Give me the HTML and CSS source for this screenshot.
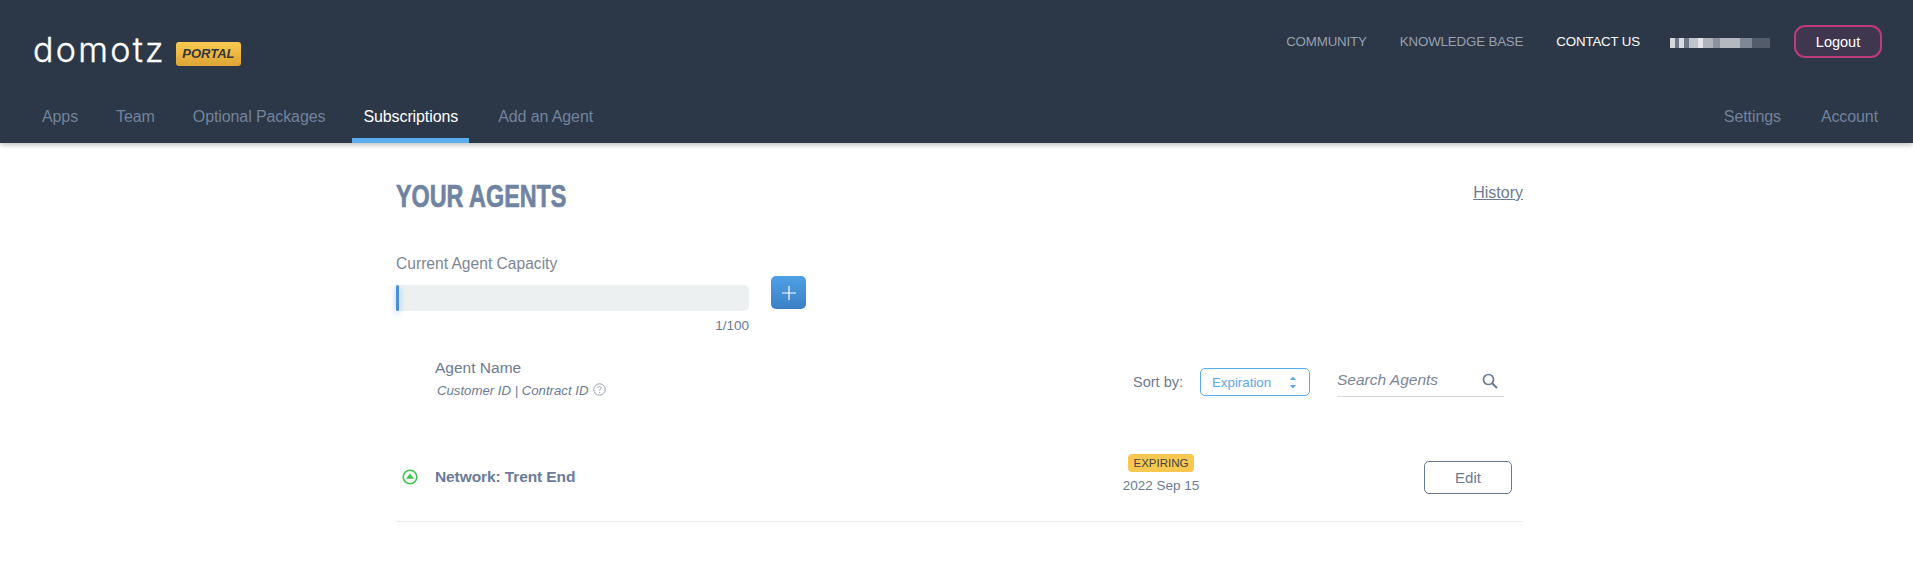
FILE: index.html
```html
<!DOCTYPE html>
<html lang="en">
<head>
<meta charset="utf-8">
<title>Domotz Portal - Subscriptions</title>
<link rel="stylesheet" href="styles.css">
</head>
<body>
<header class="header">
  <div class="top">
    <div class="brand">
      <span class="logo">domotz</span>
      <span class="portal">PORTAL</span>
    </div>
    <nav class="top-links">
      <a class="top-link">COMMUNITY</a>
      <a class="top-link">KNOWLEDGE BASE</a>
      <a class="top-link active">CONTACT US</a>
      <span class="redacted"></span>
      <button class="logout">Logout</button>
    </nav>
  </div>
  <div class="tabs">
    <nav class="tab-group">
      <a class="tab">Apps</a>
      <a class="tab">Team</a>
      <a class="tab">Optional Packages</a>
      <a class="tab current">Subscriptions</a>
      <a class="tab">Add an Agent</a>
    </nav>
    <nav class="tab-group right">
      <a class="tab">Settings</a>
      <a class="tab">Account</a>
    </nav>
  </div>
</header>
<main class="main">
  <div class="title-row">
    <h1 class="title">YOUR AGENTS</h1>
    <a class="history">History</a>
  </div>
  <div class="capacity-label">Current Agent Capacity</div>
  <div class="capacity">
    <div class="meter-wrap">
      <div class="meter"><div class="meter-fill"></div></div>
      <div class="meter-count">1/100</div>
    </div>
    <button class="add" aria-label="Add">
      <svg width="16" height="16" viewBox="0 0 16 16"><path d="M8 1v14M1 8h14" stroke="#fff" stroke-width="1.2" fill="none"/></svg>
    </button>
  </div>
  <div class="list-head">
    <div class="head-left">
      <div class="head-name">Agent Name</div>
      <div class="head-ids">Customer ID | Contract ID
        <svg class="help" width="13" height="13" viewBox="0 0 13 13"><circle cx="6.5" cy="6.5" r="5.7" fill="none" stroke="#7f8ba0" stroke-width=".8"/><path d="M4.9 5.1c0-2.1 3.2-2.1 3.2-.1 0 1.2-1.6 1.2-1.6 2.7" fill="none" stroke="#7f8ba0" stroke-width=".8"/><circle cx="6.5" cy="9.5" r=".55" fill="#7f8ba0"/></svg>
      </div>
    </div>
    <div class="head-right">
      <span class="sort-label">Sort by:</span>
      <div class="select">
        <span>Expiration</span>
        <svg width="8" height="13" viewBox="0 0 8 13"><path d="M4 0.5 7 4H1zM4 12.5 1 9h6z" fill="#5aa9ee"/></svg>
      </div>
      <div class="search">
        <span class="search-text">Search Agents</span>
        <svg width="16" height="16" viewBox="0 0 16 16"><circle cx="6.5" cy="6.5" r="5" fill="none" stroke="#6b7b93" stroke-width="1.7"/><path d="M10.2 10.2 15 15" stroke="#6b7b93" stroke-width="2" fill="none"/></svg>
      </div>
    </div>
  </div>
  <div class="row">
    <div class="row-left">
      <svg class="status" width="16" height="16" viewBox="0 0 16 16"><circle cx="8" cy="8" r="6.8" fill="none" stroke="#3dc350" stroke-width="1.6"/><path d="M8 4.6 12 9.8H4z" fill="#3dc350"/></svg>
      <span class="row-name">Network: Trent End</span>
    </div>
    <div class="expiry">
      <span class="badge">EXPIRING</span>
      <span class="date">2022 Sep 15</span>
    </div>
    <button class="edit">Edit</button>
  </div>
</main>
</body>
</html>
```
FILE: styles.css
```css
* { box-sizing: border-box; }
html, body { margin: 0; padding: 0; }
body {
  background: #fff;
  font-family: "Liberation Sans", Arial, sans-serif;
  color: #6b7b93;
  height: 577px;
  overflow: hidden;
}
a { color: inherit; text-decoration: none; }
button { font-family: inherit; cursor: pointer; }

.header {
  height: 143px;
  background: #2c3748;
  box-shadow: 0 2px 5px rgba(0, 0, 0, .25);
  display: flex;
  flex-direction: column;
}
.top {
  height: 87px;
  display: flex;
  justify-content: space-between;
  padding: 25px 31px 0 33px;
}
.brand { display: flex; align-items: flex-start; gap: 10px; }
.logo {
  font-family: Inter, sans-serif;
  font-weight: 300;
  font-size: 34px;
  line-height: 38px;
  letter-spacing: 2.3px;
  color: #fff;
  -webkit-text-stroke: .4px #fff;
  margin-top: 6px;
}
.portal {
  margin-top: 17px;
  width: 65px;
  height: 24px;
  line-height: 24px;
  text-align: center;
  border-radius: 3px;
  background: linear-gradient(#fbc94f, #dda435);
  color: #35363a;
  font-size: 13px;
  font-weight: 700;
  font-style: italic;
}
.top-links { display: flex; align-items: flex-start; }
.top-link {
  font-size: 13.3px;
  line-height: 33px;
  color: #98a1ae;
  margin-right: 33px;
  letter-spacing: -.15px;
}
.top-link.active { color: #fff; }
.redacted {
  width: 100px;
  height: 10px;
  margin: 13px 24px 0 -3px;
  background: linear-gradient(90deg, #d5d8dd 0 5%, #6f7887 5% 9%, #d8dbe0 9% 14%, #6e7786 14% 19%, #c0c4cb 19% 28%, #e4e6ea 28% 33%, #aeb3bc 33% 43%, #8b93a0 43% 50%, #b4b9c1 50% 70%, #7f8795 70% 82%, #525c6b 82% 100%);
}
.logout {
  width: 88px;
  height: 33px;
  border: 2px solid #bf3a7c;
  border-radius: 11px;
  background: #3f3650;
  color: #fff;
  font-size: 14.5px;
}

.tabs {
  flex: 1;
  display: flex;
  justify-content: space-between;
  padding: 0 24px 0 31px;
}
.tab-group { display: flex; }
.tab {
  padding: 0 11px;
  margin-right: 16px;
  font-size: 16px;
  line-height: 60px;
  height: 56px;
  color: #72839c;
  letter-spacing: -.1px;
}
.tab-group.right .tab { margin-right: 18px; }
.tab-group.right .tab:last-child { margin-right: 0; }
.tab.current {
  color: #fff;
  border-bottom: 5px solid #5aaef0;
  margin-right: 18px;
}

.main {
  width: 1127px;
  margin-left: 396px;
}
.title-row {
  display: flex;
  justify-content: space-between;
  align-items: flex-start;
  padding-top: 38px;
  height: 112px;
}
.title {
  margin: 0;
  font-size: 32px;
  line-height: 30px;
  font-weight: 700;
  color: #6f83a2;
  transform: scaleX(.73);
  transform-origin: left center;
  -webkit-text-stroke: .7px #6f83a2;
}
.history {
  font-size: 16px;
  line-height: 18px;
  text-decoration: underline;
  margin-top: 3px;
}
.capacity-label {
  font-size: 15.6px;
  line-height: 18px;
  color: #7d8696;
  height: 24px;
}
.capacity { display: flex; align-items: flex-start; gap: 22px; height: 80px; }
.meter-wrap { width: 353px; padding-top: 6px; }
.meter {
  height: 26px;
  background: #ecf0f1;
  border-radius: 5px;
}
.meter-fill {
  width: 3px;
  height: 100%;
  background: #4a90d4;
  border-radius: 2px;
  box-shadow: 0 2px 6px rgba(74, 144, 212, .5);
}
.meter-count {
  text-align: right;
  font-size: 13.5px;
  line-height: 16px;
  margin-top: 7px;
}
.add {
  width: 35px;
  height: 33px;
  border: 0;
  border-radius: 5px;
  background: linear-gradient(#4fa0e4, #3b80c6);
  display: flex;
  align-items: center;
  justify-content: center;
  padding: 0;
  margin-top: -3px;
}

.list-head {
  display: flex;
  justify-content: space-between;
  align-items: flex-start;
  height: 85px;
  padding: 0 19px 0 39px;
}
.head-name { font-size: 15.5px; line-height: 18px; }
.head-ids {
  font-size: 13.2px;
  line-height: 16px;
  font-style: italic;
  margin: 6px 0 0 2px;
  display: flex;
  align-items: flex-start;
  gap: 5px;
}
.head-right { display: flex; align-items: flex-start; }
.sort-label { font-size: 14.5px; line-height: 28px; margin-top: 9px; margin-right: 17px; }
.select {
  width: 110px;
  height: 28px;
  margin-top: 9px;
  border: 1px solid #5aa9ee;
  border-radius: 5px;
  color: #5aa9ee;
  font-size: 13.3px;
  display: flex;
  align-items: center;
  justify-content: space-between;
  padding: 0 12px 0 11px;
}
.search {
  width: 167px;
  height: 38px;
  margin-left: 27px;
  border-bottom: 1px solid #d5d8dd;
  display: flex;
  justify-content: space-between;
  align-items: flex-start;
  padding: 12px 6px 0 0;
}
.search-text { font-size: 15.5px; line-height: 18px; font-style: italic; color: #7d8696; }
.search svg { margin-top: 2px; }

.row {
  height: 78px;
  border-bottom: 1px solid #eceef0;
  display: flex;
  align-items: center;
  padding: 0 11px 12px 6px;
}
.row-left { display: flex; align-items: center; gap: 17px; width: 722px; }
.row-name { font-size: 15.5px; font-weight: 700; color: #6b7b9a; letter-spacing: -.1px; }
.expiry { display: flex; flex-direction: column; align-items: center; width: 74px; gap: 5px; white-space: nowrap; padding-bottom: 5px; }
.badge {
  width: 66px;
  height: 18px;
  line-height: 18px;
  text-align: center;
  background: #f8c74f;
  border-radius: 4px;
  font-size: 11.5px;
  color: #444;
}
.date { font-size: 13.5px; line-height: 17px; }
.edit {
  width: 88px;
  height: 33px;
  margin-left: auto;
  margin-top: 1px;
  background: #fff;
  border: 1px solid #6b7b93;
  border-radius: 5px;
  color: #6b7b93;
  font-size: 15px;
}
```
